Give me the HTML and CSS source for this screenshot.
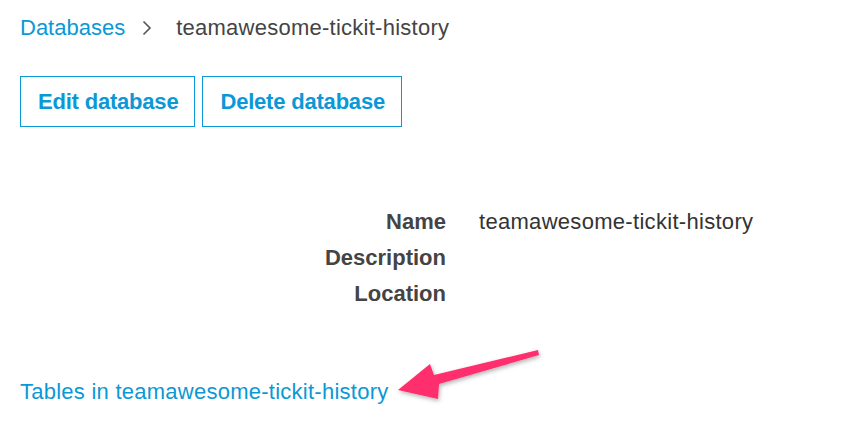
FILE: index.html
```html
<!DOCTYPE html>
<html>
<head>
<meta charset="utf-8">
<link rel="stylesheet" href="styles.css">
</head>
<body>
<div class="page">
  <nav class="crumbs">
    <a class="link crumb-link" href="#">Databases</a>
    <svg class="chev" width="10" height="16" viewBox="0 0 10 16"><path d="M1.5 1.5 L8 8 L1.5 14.5" fill="none" stroke="#555" stroke-width="1.6"/></svg>
    <span class="current">teamawesome-tickit-history</span>
  </nav>
  <div class="actions">
    <button class="btn">Edit database</button>
    <button class="btn">Delete database</button>
  </div>
  <dl class="details">
    <dt>Name</dt><dd>teamawesome-tickit-history</dd>
    <dt>Description</dt><dd></dd>
    <dt>Location</dt><dd></dd>
  </dl>
  <a class="link tables" href="#">Tables in teamawesome-tickit-history</a>
  <svg class="arrow" width="842" height="442" viewBox="0 0 842 442">
    <defs>
      <filter id="sh" x="-20%" y="-50%" width="140%" height="200%">
        <feDropShadow dx="1" dy="2" stdDeviation="2" flood-color="#000" flood-opacity="0.3"/>
      </filter>
    </defs>
    <polygon filter="url(#sh)" fill="#ff2d6c" points="398,390 430,364 434,375 538,350 539,355 439,384 438,399"/>
  </svg>
</div>
</body>
</html>
```
FILE: styles.css
```css
html, body {
  margin: 0;
  padding: 0;
  background: #ffffff;
}
.page {
  position: relative;
  width: 842px;
  height: 442px;
  padding: 14px 20px 0 20px;
  box-sizing: border-box;
  font-family: "Liberation Sans", Arial, sans-serif;
  font-size: 22px;
  color: #444444;
}
.link {
  color: #0b98d6;
  text-decoration: none;
  letter-spacing: 0.25px;
}
.crumb-link {
  letter-spacing: 0;
}
.crumbs {
  display: flex;
  align-items: center;
  height: 28px;
  line-height: 28px;
}
.chev {
  margin: 0 0 0 17px;
}
.current {
  margin-left: 24px;
  color: #444444;
  letter-spacing: 0.25px;
}
.actions {
  display: flex;
  gap: 7px;
  margin-top: 34px;
}
.btn {
  height: 51px;
  box-sizing: border-box;
  padding: 0 16px 0 17px;
  border: 1px solid #0b98d6;
  background: #ffffff;
  color: #0b98d6;
  font-family: "Liberation Sans", Arial, sans-serif;
  font-size: 22px;
  font-weight: bold;
  letter-spacing: -0.2px;
}
.details {
  display: grid;
  grid-template-columns: 426px 1fr;
  column-gap: 33px;
  margin: 77px 0 0 0;
  line-height: 36px;
}
.details dt {
  text-align: right;
  font-weight: bold;
  color: #444444;
}
.details dd {
  margin: 0;
  color: #333333;
  min-height: 36px;
  letter-spacing: 0.3px;
}
.tables {
  display: block;
  margin-top: 66px;
  line-height: 28px;
}
.arrow {
  position: absolute;
  left: 0;
  top: 0;
  pointer-events: none;
}
```
